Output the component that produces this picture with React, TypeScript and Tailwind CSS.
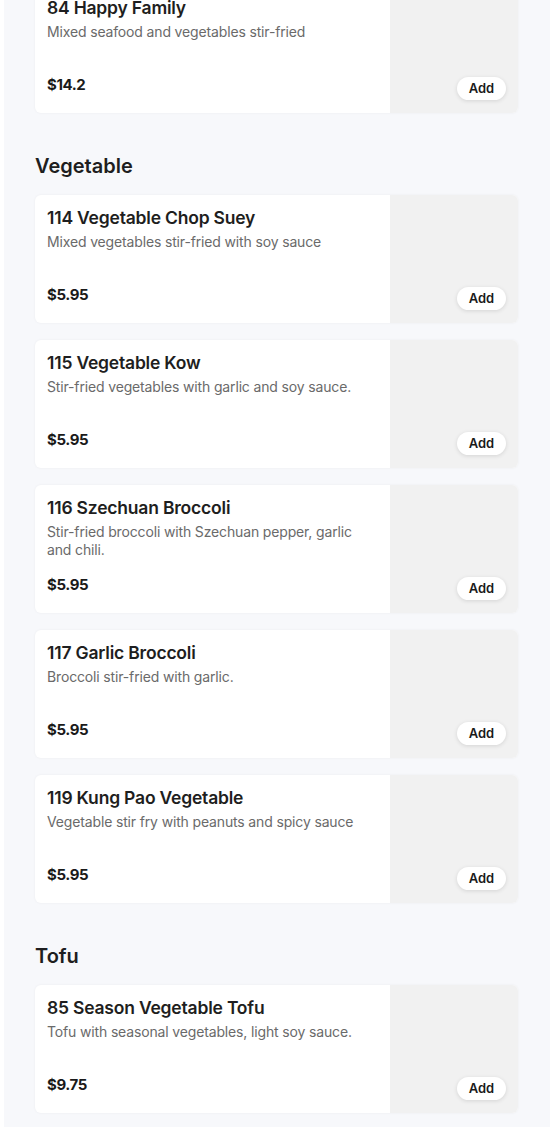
import React from 'react';

type Dish = {
  name: string;
  description: string;
  price: string;
};

const sections: { title?: string; dishes: Dish[] }[] = [
  {
    dishes: [
      { name: '84 Happy Family', description: 'Mixed seafood and vegetables stir-fried', price: '$14.2' },
    ],
  },
  {
    title: 'Vegetable',
    dishes: [
      { name: '114 Vegetable Chop Suey', description: 'Mixed vegetables stir-fried with soy sauce', price: '$5.95' },
      { name: '115 Vegetable Kow', description: 'Stir-fried vegetables with garlic and soy sauce.', price: '$5.95' },
      { name: '116 Szechuan Broccoli', description: 'Stir-fried broccoli with Szechuan pepper, garlic and chili.', price: '$5.95' },
      { name: '117 Garlic Broccoli', description: 'Broccoli stir-fried with garlic.', price: '$5.95' },
      { name: '119 Kung Pao Vegetable', description: 'Vegetable stir fry with peanuts and spicy sauce', price: '$5.95' },
    ],
  },
  {
    title: 'Tofu',
    dishes: [
      { name: '85 Season Vegetable Tofu', description: 'Tofu with seasonal vegetables, light soy sauce.', price: '$9.75' },
    ],
  },
];

function DishCard({ dish }: { dish: Dish }) {
  return (
    <div className="flex h-[128px] w-[483px] overflow-hidden rounded-md bg-white shadow-[0_0_3px_rgba(0,0,0,0.05)]">
      <div className="flex flex-1 flex-col justify-between px-[12px] pt-[9px] pb-[16px]">
        <div>
          <h3 className="text-[17.5px] leading-[28px] font-semibold tracking-[-0.2px] text-[#1e1e20]">{dish.name}</h3>
          <p className="mt-px text-[14px] leading-[18px] tracking-[-0.15px] text-[#6a6a6a]">{dish.description}</p>
        </div>
        <span className="text-[15px] leading-[24px] font-bold tracking-[-0.4px] text-[#1a1a1a]">{dish.price}</span>
      </div>
      <div className="relative w-[128px] bg-[#f1f1f1]">
        {/* Add button floats over the photo slot */}
        <button className="absolute right-[12px] bottom-[13px] h-[23px] w-[49px] rounded-full bg-white text-[13px] font-semibold text-[#1a1a1a] shadow-[0_1px_4px_rgba(0,0,0,0.12)]">
          Add
        </button>
      </div>
    </div>
  );
}

export default function App() {
  return (
    <div className="bg-white pl-[4px]" style={{ fontFamily: 'Inter, "Noto Sans", sans-serif' }}>
      <div className="overflow-hidden bg-[#f7f8fb] pl-[31px] pb-[15px]">
        {sections.map((section, i) => (
          <section key={i} className={section.title ? 'pt-[39px]' : '-mt-[15px]'}>
            {section.title && (
              <h2 className="mb-[15px] text-[20px] leading-[28px] font-semibold text-[#1e1e20]">{section.title}</h2>
            )}
            <div className="flex flex-col gap-[17px]">
              {section.dishes.map((dish) => (
                <DishCard key={dish.name} dish={dish} />
              ))}
            </div>
          </section>
        ))}
      </div>
    </div>
  );
}
